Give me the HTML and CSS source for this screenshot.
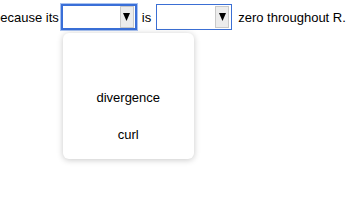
FILE: index.html
```html
<!DOCTYPE html>
<html lang="en">
<head>
    <meta charset="UTF-8">
    <title>Theorem blank</title>
    <link rel="stylesheet" href="styles.css">
</head>
<body>
    <div class="sentence">
        <span class="lead">because its</span>
        <span class="select-wrap">
            <span class="select focused">
                <span class="select-arrow"><svg width="7" height="8" viewBox="0 0 7 8"><polygon points="0,0 7,0 3.5,8" fill="#000"/></svg></span>
            </span>
            <div class="menu">
                <div class="menu-item"></div>
                <div class="menu-item">divergence</div>
                <div class="menu-item">curl</div>
            </div>
        </span>
        <span class="word">is</span>
        <span class="select">
            <span class="select-arrow"><svg width="7" height="8" viewBox="0 0 7 8"><polygon points="0,0 7,0 3.5,8" fill="#000"/></svg></span>
        </span>
        <span class="tail">zero throughout R.</span>
    </div>
</body>
</html>
```

FILE: styles.css
```css
* {
    margin: 0;
    padding: 0;
    box-sizing: border-box;
}
html, body {
    height: 100%;
}
body {
    background: #fff;
    color: #000;
    font-family: 'Liberation Sans', Arial, sans-serif;
    font-size: 13px;
}
.sentence {
    display: flex;
    align-items: center;
    padding-top: 4px;
    margin-left: -7px;
    white-space: nowrap;
}
.lead {
    margin-right: 2px;
}
.word {
    margin: 0 5px;
}
.tail {
    margin-left: 6px;
}
.select-wrap {
    position: relative;
    display: flex;
}
.select {
    display: flex;
    align-items: center;
    justify-content: flex-end;
    width: 76px;
    height: 26px;
    border: 1px solid #3b6fd4;
    background: #fff;
    padding-right: 2px;
}
.select.focused {
    border: 2px solid #3a6fd8;
    box-shadow: 0 0 0 1px #a9c2f0;
    padding-right: 1px;
}
.select-arrow {
    display: flex;
    align-items: center;
    justify-content: center;
    width: 14px;
    height: 22px;
    background: #ececec;
    border: 1px solid #c9c9c9;
}
.select-arrow svg {
    display: block;
}
.menu {
    position: absolute;
    z-index: 10;
    left: 2px;
    top: 29px;
    width: 131px;
    height: 126px;
    background: #fff;
    border-radius: 6px;
    box-shadow: 0 1px 6px rgba(0, 0, 0, 0.22);
    padding-top: 9px;
}
.menu-item {
    height: 37px;
    line-height: 37px;
    text-align: center;
}
```
